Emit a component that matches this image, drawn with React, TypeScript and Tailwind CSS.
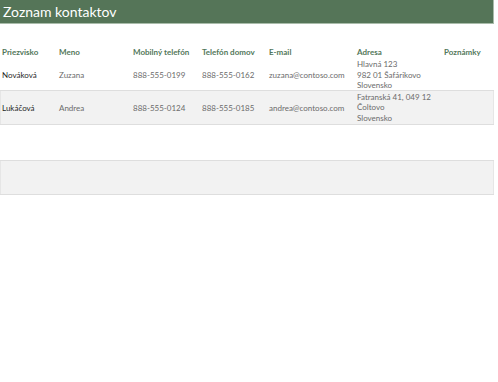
import React from 'react';

interface Contact {
  last: string;
  first: string;
  mobile: string;
  home: string;
  email: string;
  address: string[];
  notes: string;
}

const contacts: Contact[] = [
  {
    last: 'Nováková',
    first: 'Zuzana',
    mobile: '888-555-0199',
    home: '888-555-0162',
    email: 'zuzana@contoso.com',
    address: ['Hlavná 123', '982 01 Šafárikovo', 'Slovensko'],
    notes: '',
  },
  {
    last: 'Lukáčová',
    first: 'Andrea',
    mobile: '888-555-0124',
    home: '888-555-0185',
    email: 'andrea@contoso.com',
    address: ['Fatranská 41, 049 12', 'Čoltovo', 'Slovensko'],
    notes: '',
  },
];

const headers = ['Priezvisko', 'Meno', 'Mobilný telefón', 'Telefón domov', 'E-mail', 'Adresa', 'Poznámky'];

const cols = 'grid grid-cols-[57px_74px_69px_67px_88px_87px_52px]';
const edge = 'shadow-[inset_1px_0_0_#e6e6e6,inset_-1px_0_0_#e6e6e6]';

export default function App() {
  return (
    <div className="w-[498px] h-[382px] bg-white" style={{ fontFamily: 'Lato, "Open Sans", sans-serif' }}>
      <div className="w-[494px]">
        <div className="h-[24px] bg-[#557558] border-b border-r border-[#a9bcaa] flex items-center pl-[3px]">
          <h1 className="text-white text-[14px] leading-none">Zoznam kontaktov</h1>
        </div>

        <div className={`${cols} mt-[21px] h-[14px] items-center`}>
          {headers.map((h) => (
            <div key={h} className="pl-[2px] text-[8px] font-bold text-[#52775a] whitespace-nowrap">
              {h}
            </div>
          ))}
        </div>

        {contacts.map((c, i) => (
          <div
            key={c.last}
            className={
              i % 2 === 0
                ? `${cols} h-[31px] items-center bg-white`
                : `${cols} h-[35px] items-center bg-[#f2f2f2] border-y border-[#dedede] ${edge}`
            }
          >
            <div className="pl-[2px] text-[8px] text-[#1f1f1f]">{c.last}</div>
            <div className="pl-[2px] text-[8px] text-[#6b6b6b]">{c.first}</div>
            <div className="pl-[2px] text-[8px] text-[#6b6b6b]">{c.mobile}</div>
            <div className="pl-[2px] text-[8px] text-[#6b6b6b]">{c.home}</div>
            <div className="pl-[2px] text-[8px] text-[#6b6b6b] whitespace-nowrap">{c.email}</div>
            <div className="pl-[2px] text-[8px] leading-[10.5px] text-[#6b6b6b] whitespace-nowrap">
              {c.address.map((line) => (
                <div key={line}>{line}</div>
              ))}
            </div>
            <div className="pl-[2px] text-[8px] text-[#6b6b6b]">{c.notes}</div>
          </div>
        ))}

        <div className="h-[35px] bg-white" />
        <div className={`h-[35px] bg-[#f2f2f2] border-y border-[#dedede] ${edge}`} />
      </div>
    </div>
  );
}
